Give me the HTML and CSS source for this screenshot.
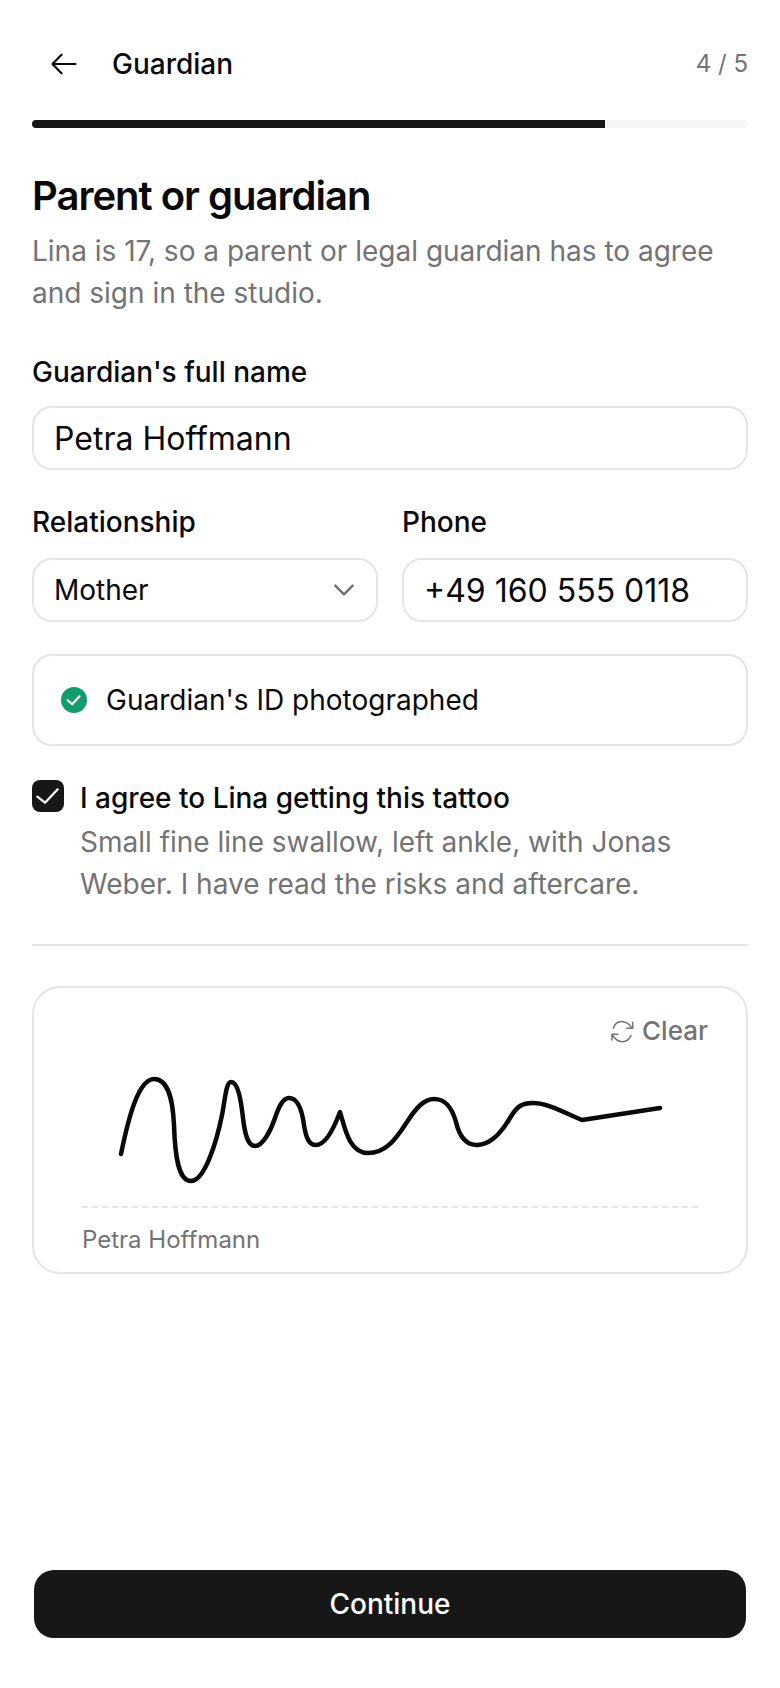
FILE: index.html
```html
<!DOCTYPE html>
<html lang="en">
<head>
<meta charset="utf-8">
<title>Guardian</title>
<link rel="stylesheet" href="styles.css">
</head>
<body>
<main class="page">
  <header class="topbar">
    <button class="back" aria-label="Back">
      <svg class="back-icon" viewBox="0 0 26 22" fill="none" stroke="currentColor" stroke-width="2.2" stroke-linecap="round" stroke-linejoin="round"><path d="M24.5 11H1.5M10.5 1.7L1.5 11l9 9.3"/></svg>
    </button>
    <span class="topbar-title">Guardian</span>
    <span class="step">4 / 5</span>
  </header>
  <div class="progress"><div class="progress-fill"></div></div>

  <h1 class="heading">Parent or guardian</h1>
  <p class="lede">Lina is 17, so a parent or legal guardian has to agree and sign in the studio.</p>

  <label class="label label-first">Guardian's full name</label>
  <div class="field field-large">Petra Hoffmann</div>

  <div class="two-col">
    <div class="col">
      <label class="label">Relationship</label>
      <div class="field field-select">
        <span>Mother</span>
        <svg class="chevron" viewBox="0 0 24 24" fill="none" stroke="currentColor" stroke-width="2.3" stroke-linecap="round" stroke-linejoin="round"><path d="M4 8l8 8 8-8"/></svg>
      </div>
    </div>
    <div class="col">
      <label class="label">Phone</label>
      <div class="field field-phone">+49 160 555 0118</div>
    </div>
  </div>

  <div class="id-card">
    <svg class="id-check" viewBox="0 0 26 26"><circle cx="13" cy="13" r="13" fill="#0f9d6b"/><path d="M6.8 13.3l4.4 4 7.3-8" fill="none" stroke="#fff" stroke-width="2.2" stroke-linecap="round" stroke-linejoin="round"/></svg>
    <span>Guardian's ID photographed</span>
  </div>

  <div class="consent">
    <div class="checkbox">
      <svg class="checkbox-mark" viewBox="0 0 32 32" fill="none" stroke="#fff" stroke-width="2.2" stroke-linecap="round" stroke-linejoin="round"><path d="M5.3 16.7l7.7 6L25.7 9.3"/></svg>
    </div>
    <div class="consent-text">
      <div class="consent-title">I agree to Lina getting this tattoo</div>
      <div class="consent-sub">Small fine line swallow, left ankle, with Jonas Weber. I have read the risks and aftercare.</div>
    </div>
  </div>

  <hr class="divider">

  <section class="sign-card">
    <button class="clear">
      <svg class="clear-icon" viewBox="0 0 24 24" fill="none" stroke="currentColor" stroke-width="1.5" stroke-linecap="round" stroke-linejoin="round"><path d="M3.3 9.3C5 4.5 8 2.5 11.5 2.5C15 2.5 19 4.5 22 9.3M22.7 3.3V9.3H16.7M21 16.7C19 20.5 16 22.7 12.7 22.7C9 22.7 5 20.5 2 15.3M2 21V15.3H7.7"/></svg>
      Clear
    </button>
    <svg class="signature" viewBox="82 1060 616 146" fill="none" stroke="#0a0a0a" stroke-width="4.5" stroke-linecap="round" stroke-linejoin="round">
      <path d="M121 1154C128 1120 138 1079 154 1079C170 1079 173 1105 174 1125C175 1155 178 1181 191 1181C205 1181 217 1140 222 1115C225 1100 226 1082 231 1082C238 1082 241 1100 243 1118C245 1135 248 1146 255 1146C263 1146 271 1130 275 1118C279 1106 283 1098 289 1098C298 1098 302 1110 304 1125C306 1138 309 1145 316 1145C326 1145 334 1128 340 1112C345 1128 349 1153 368 1153C388 1153 398 1135 407 1122C416 1108 424 1099 434 1099C446 1099 452 1108 456 1122C459 1135 465 1145 477 1145C491 1145 503 1130 510 1118C517 1106 522 1103 533 1103C548 1103 565 1113 582 1120L660 1108"/>
    </svg>
    <div class="sign-line"></div>
    <div class="sign-name">Petra Hoffmann</div>
  </section>

  <div class="footer">
    <button class="continue">Continue</button>
  </div>
</main>
</body>
</html>
```

FILE: styles.css
```css
* { box-sizing: border-box; }
html, body { margin: 0; padding: 0; background: #fff; }
body { font-family: Inter, "Liberation Sans", sans-serif; color: #0a0a0a; }
button { font: inherit; color: inherit; background: none; border: 0; padding: 0; }

.page { height: 1688px; padding: 40px 32px 50px; display: flex; flex-direction: column; }

.topbar { display: flex; align-items: center; height: 48px; padding-left: 8px; }
.back { width: 48px; height: 48px; display: flex; align-items: center; justify-content: center; margin-right: 24px; }
.back-icon { width: 26px; height: 22px; display: block; }
.topbar-title { font-size: 28px; font-weight: 500; line-height: 40px; }
.step { margin-left: auto; font-size: 24px; line-height: 32px; color: #737373; }

.progress { height: 8px; margin-top: 32px; background: #f5f5f5; border-radius: 4px; overflow: hidden; }
.progress-fill { width: 80%; height: 100%; background: #171717; }

.heading { margin: 44px 0 0; font-size: 40px; line-height: 48px; font-weight: 600; letter-spacing: -1px; }
.lede { margin: 10px 0 0; font-size: 28px; line-height: 42px; color: #737373; }

.label { display: block; font-size: 28px; line-height: 32px; font-weight: 500; margin-bottom: 18px; }
.label-first { margin-top: 42px; }

.field { height: 64px; border: 2px solid #e5e5e5; border-radius: 20px; padding: 0 20px; display: flex; align-items: center; background: #fff; }
.field-large { font-size: 32px; }
.field-select { font-size: 28px; justify-content: space-between; padding-right: 19px; }
.field-phone { font-size: 32px; white-space: nowrap; }
.chevron { width: 26px; height: 26px; color: #737373; display: block; }

.two-col { display: grid; grid-template-columns: 1fr 1fr; gap: 24px; margin-top: 36px; }
.two-col .label { margin-bottom: 20px; }

.id-card { margin-top: 32px; height: 92px; border: 2px solid #e5e5e5; border-radius: 20px; padding: 0 27px; display: flex; align-items: center; gap: 19px; font-size: 28px; }
.id-check { width: 26px; height: 26px; display: block; flex: none; }

.consent { display: flex; gap: 16px; margin-top: 34px; }
.checkbox { width: 32px; height: 32px; flex: none; border-radius: 8px; background: #171717; }
.checkbox-mark { width: 32px; height: 32px; display: block; }
.consent-title { font-size: 28px; line-height: 36px; font-weight: 500; }
.consent-sub { font-size: 28px; line-height: 42px; color: #737373; margin-top: 5px; }

.divider { border: 0; height: 2px; background: #e5e5e5; margin: 39px 0 0; }

.sign-card { position: relative; margin-top: 40px; height: 288px; border: 2px solid #e5e5e5; border-radius: 28px; padding: 72px 48px 0; }
.clear { position: absolute; top: 25px; right: 38px; display: flex; align-items: center; gap: 8px; font-size: 26px; line-height: 36px; font-weight: 500; color: #737373; }
.clear-icon { width: 24px; height: 24px; display: block; }
.signature { display: block; width: 616px; height: 146px; }
.sign-line { height: 2px; background: repeating-linear-gradient(to right, #e5e5e5 0 6px, transparent 6px 10px); }
.sign-name { margin-top: 16px; font-size: 24px; line-height: 32px; color: #737373; }

.footer { margin-top: auto; padding: 0 2px; }
.continue { display: block; width: 100%; height: 68px; border-radius: 20px; background: #171717; color: #fff; font-size: 28px; font-weight: 500; text-align: center; }
```
